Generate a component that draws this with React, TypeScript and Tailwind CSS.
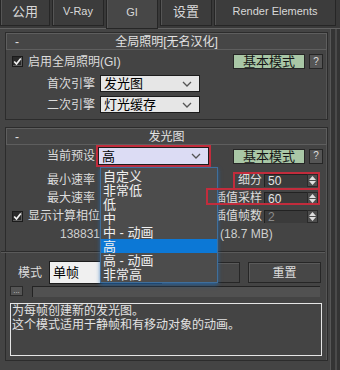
import React from 'react';

const FONT = '"Liberation Sans", "Noto Sans CJK SC", sans-serif';

const Chevron: React.FC = () => (
  <svg width="10" height="6" viewBox="0 0 10 6" className="shrink-0">
    <polyline points="1,1 5,5 9,1" fill="none" stroke="#555" strokeWidth="1.3" />
  </svg>
);

const CheckBox: React.FC = () => (
  <div className="w-[11px] h-[11px] bg-[#2a2a2a] border border-[#1b1b1b] shadow-[inset_-1px_-1px_0_#5a5a5a] flex items-center justify-center shrink-0">
    <svg width="9" height="9" viewBox="0 0 9 9">
      <polyline points="1.2,4.5 3.5,7 7.8,1.5" fill="none" stroke="#f2f2f2" strokeWidth="1.7" />
    </svg>
  </div>
);

const Select: React.FC<{ value: string; width: string; bg: string }> = ({ value, width, bg }) => (
  <div className={`${width} ${bg} h-full border border-[#1c1c1c] flex items-center justify-between pl-[3px] pr-[7px] text-[13px] text-black leading-none`}>
    <span>{value}</span>
    <Chevron />
  </div>
);

const ModeButton: React.FC = () => (
  <div className="flex items-center gap-[4px]">
    <div className="w-[72px] h-[15px] bg-[#a9c7a6] border border-[#262626] flex items-center justify-center text-[13px] text-[#151515] leading-none">
      基本模式
    </div>
    <div className="w-[14px] h-[15px] bg-[#555555] border border-[#262626] flex items-center justify-center text-[10px] text-[#dedede] leading-none">
      ?
    </div>
  </div>
);

const Spinner: React.FC<{ label: string; value: string; dim?: boolean }> = ({ label, value, dim }) => (
  <div className="flex items-center mr-[9px]">
    <span className="text-[12px] text-[#dcdcdc] mr-[2px] whitespace-nowrap">{label}</span>
    <div className="w-[43px] h-[13px] bg-[#3b3b3b] border-t border-l border-[#222] flex items-center pl-[3px] text-[12px] leading-none">
      <span className={dim ? 'text-[#8a8a8a]' : 'text-[#e4e4e4]'}>{value}</span>
    </div>
    <div className="w-[11px] h-[13px] bg-[#4e4e4e] border border-[#2a2a2a] flex flex-col items-center justify-center gap-[1px]">
      <svg width="7" height="4" viewBox="0 0 7 4"><polygon points="0,4 3.5,0 7,4" fill="#e0e0e0" /></svg>
      <svg width="7" height="4" viewBox="0 0 7 4"><polygon points="0,0 3.5,4 7,0" fill="#e0e0e0" /></svg>
    </div>
  </div>
);

const RolloutHeader: React.FC<{ title: string }> = ({ title }) => (
  <div className="h-[17px] border border-[#5e5e5e] bg-[#464646] flex items-center text-[12px] text-[#e2e2e2] leading-none relative">
    <span className="pl-[8px] w-[20px]">-</span>
    <span className="flex-1 text-center pr-[20px]">{title}</span>
  </div>
);

const tabs = [
  { name: '公用', w: 'w-[50px]', active: false },
  { name: 'V-Ray', w: 'w-[52px]', active: false },
  { name: 'GI', w: 'w-[52px]', active: true },
  { name: '设置', w: 'w-[52px]', active: false },
  { name: 'Render Elements', w: 'w-[122px]', active: false },
];

const presets = ['自定义', '非常低', '低', '中', '中 - 动画', '高', '高 - 动画', '非常高'];

const App: React.FC = () => {
  return (
    <div className="w-[340px] h-[370px] bg-[#444444] relative overflow-hidden" style={{ fontFamily: FONT }}>
      {/* Tabs */}
      <div className="h-[29px] bg-[#393939] border-b border-[#626262] flex items-start gap-[2px]">
        {tabs.map((t) => (
          <div
            key={t.name}
            className={`${t.w} ${t.active ? 'h-[29px] bg-[#474747] relative z-10' : 'h-[26px] bg-[#3c3c3c]'} border-x border-b border-[#262626] shadow-[inset_1px_0_0_#555] flex items-center justify-center text-[13px] text-[#d8d8d8] leading-none pb-[3px]`}
          >
            <span className={t.name === 'V-Ray' || t.name === 'Render Elements' || t.name === 'GI' ? 'text-[11px]' : ''}>{t.name}</span>
          </div>
        ))}
      </div>

      <div className="flex">
        <div className="w-[330px] pt-[3px]">
          {/* Rollout 1 */}
          <div className="ml-[5px] w-[323px] border border-[#2c2c2c] shadow-[inset_-1px_0_0_#555] pb-[6px]">
            <RolloutHeader title="全局照明[无名汉化]" />
            <div className="mt-[4px] h-[15px] flex items-center">
              <div className="ml-[6px]"><CheckBox /></div>
              <span className="ml-[5px] text-[12px] text-[#dcdcdc]">启用全局照明(GI)</span>
              <div className="ml-auto mr-[4px]"><ModeButton /></div>
            </div>
            <div className="mt-[6px] h-[17px] flex items-center">
              <span className="w-[89px] text-right text-[12px] text-[#dcdcdc]">首次引擎</span>
              <div className="ml-[5px] h-full"><Select value="发光图" width="w-[100px]" bg="bg-[#e6e6e6]" /></div>
            </div>
            <div className="mt-[4px] h-[17px] flex items-center">
              <span className="w-[89px] text-right text-[12px] text-[#dcdcdc]">二次引擎</span>
              <div className="ml-[5px] h-full"><Select value="灯光缓存" width="w-[100px]" bg="bg-[#e6e6e6]" /></div>
            </div>
          </div>

          {/* Rollout 2 */}
          <div className="mt-[7px] ml-[5px] w-[323px] border border-[#2c2c2c] shadow-[inset_-1px_0_0_#555] pb-[4px]">
            <RolloutHeader title="发光图" />
            <div className="h-[22px] flex items-center">
              <span className="w-[89px] text-right text-[12px] text-[#dcdcdc]">当前预设</span>
              <div className="ml-[1px] h-[22px] border-2 border-[#c22c3c]">
                <Select value="高" width="w-[111px]" bg="bg-[#dcdcf4]" />
              </div>
              <div className="ml-auto mr-[4px]"><ModeButton /></div>
            </div>
            <div className="mt-[4px] h-[18px] flex items-center justify-between">
              <span className="w-[89px] text-right text-[12px] text-[#dcdcdc]">最小速率</span>
              <Spinner label="细分" value="50" />
            </div>
            <div className="h-[18px] flex items-center justify-between">
              <span className="w-[89px] text-right text-[12px] text-[#dcdcdc]">最大速率</span>
              <Spinner label="插值采样" value="60" />
            </div>
            <div className="h-[18px] flex items-center justify-between">
              <div className="flex items-center">
                <div className="ml-[6px]"><CheckBox /></div>
                <span className="ml-[5px] text-[12px] text-[#dcdcdc]">显示计算相位</span>
              </div>
              <Spinner label="插值帧数" value="2" dim />
            </div>
            <div className="mt-[2px] h-[14px] flex items-center text-[12px] text-[#cfcfcf] leading-none">
              <span className="w-[94px] text-right">138831</span>
              <span className="w-[120px]" />
              <span>(18.7 MB)</span>
            </div>

            <div className="mt-[10px] h-[2px] border-t border-[#2c2c2c] border-b border-b-[#5a5a5a] -ml-[5px] mr-[2px]" />

            <div className="mt-[8px] h-[23px] flex items-center">
              <span className="ml-[12px] w-[31px] text-[12px] text-[#dcdcdc]">模式</span>
              <div className="h-[23px]">
                <div className="w-[113px] h-full bg-[#f0f0f0] border border-[#1c1c1c] flex items-center pl-[3px] text-[13px] text-black">单帧</div>
              </div>
              <div className="ml-[3px] w-[75px] h-[21px] bg-[#474747] border border-[#262626] shadow-[inset_1px_1px_0_#5a5a5a]" />
              <div className="ml-[8px] w-[73px] h-[21px] bg-[#474747] border border-[#262626] shadow-[inset_1px_1px_0_#5a5a5a] flex items-center justify-center text-[12px] text-[#dcdcdc]">
                重置
              </div>
            </div>
            <div className="mt-[2px] h-[10px] flex items-center">
              <div className="ml-[4px] w-[13px] h-[10px] bg-[#555] border border-[#2a2a2a] flex items-end justify-center text-[8px] text-[#cfcfcf] leading-none">...</div>
              <div className="ml-[9px] w-[288px] h-[11px] bg-[#515151] border-t border-l border-[#232323]" />
            </div>
            <div className="mt-[7px] ml-[4px] w-[312px] h-[53px] border border-[#e6e6e6] px-[1px] text-[12px] text-[#e2e2e2] leading-[14px]">
              <div>为每帧创建新的发光图。</div>
              <div>这个模式适用于静帧和有移动对象的动画。</div>
            </div>
          </div>
        </div>

        {/* right strip */}
        <div className="w-[10px] h-[341px] bg-[#343434] border-l border-[#565656] flex justify-center">
          <div className="w-[2px] h-full bg-[#4a4a4a]" />
        </div>
      </div>

      {/* Open preset dropdown */}
      <div className="absolute left-[100px] top-[167px] w-[118px] h-[116px] bg-[#4c4c4c] border border-[#3f6f9c] shadow-[0_2px_4px_rgba(30,110,190,0.7)] pt-[1px] z-20">
        {presets.map((p) => (
          <div
            key={p}
            className={`h-[14px] flex items-center pl-[2px] text-[13px] leading-none text-[#f0f0f0] ${p === '高' ? 'bg-[#0c78d6]' : ''}`}
          >
            {p}
          </div>
        ))}
      </div>

      {/* annotation boxes */}
      <div className="absolute left-[233px] top-[172px] w-[87px] h-[18px] border-2 border-[#c22c3c] z-30" />
      <div className="absolute left-[206px] top-[188px] w-[114px] h-[17px] border-2 border-[#c22c3c] z-30" />
    </div>
  );
};

export default App;
